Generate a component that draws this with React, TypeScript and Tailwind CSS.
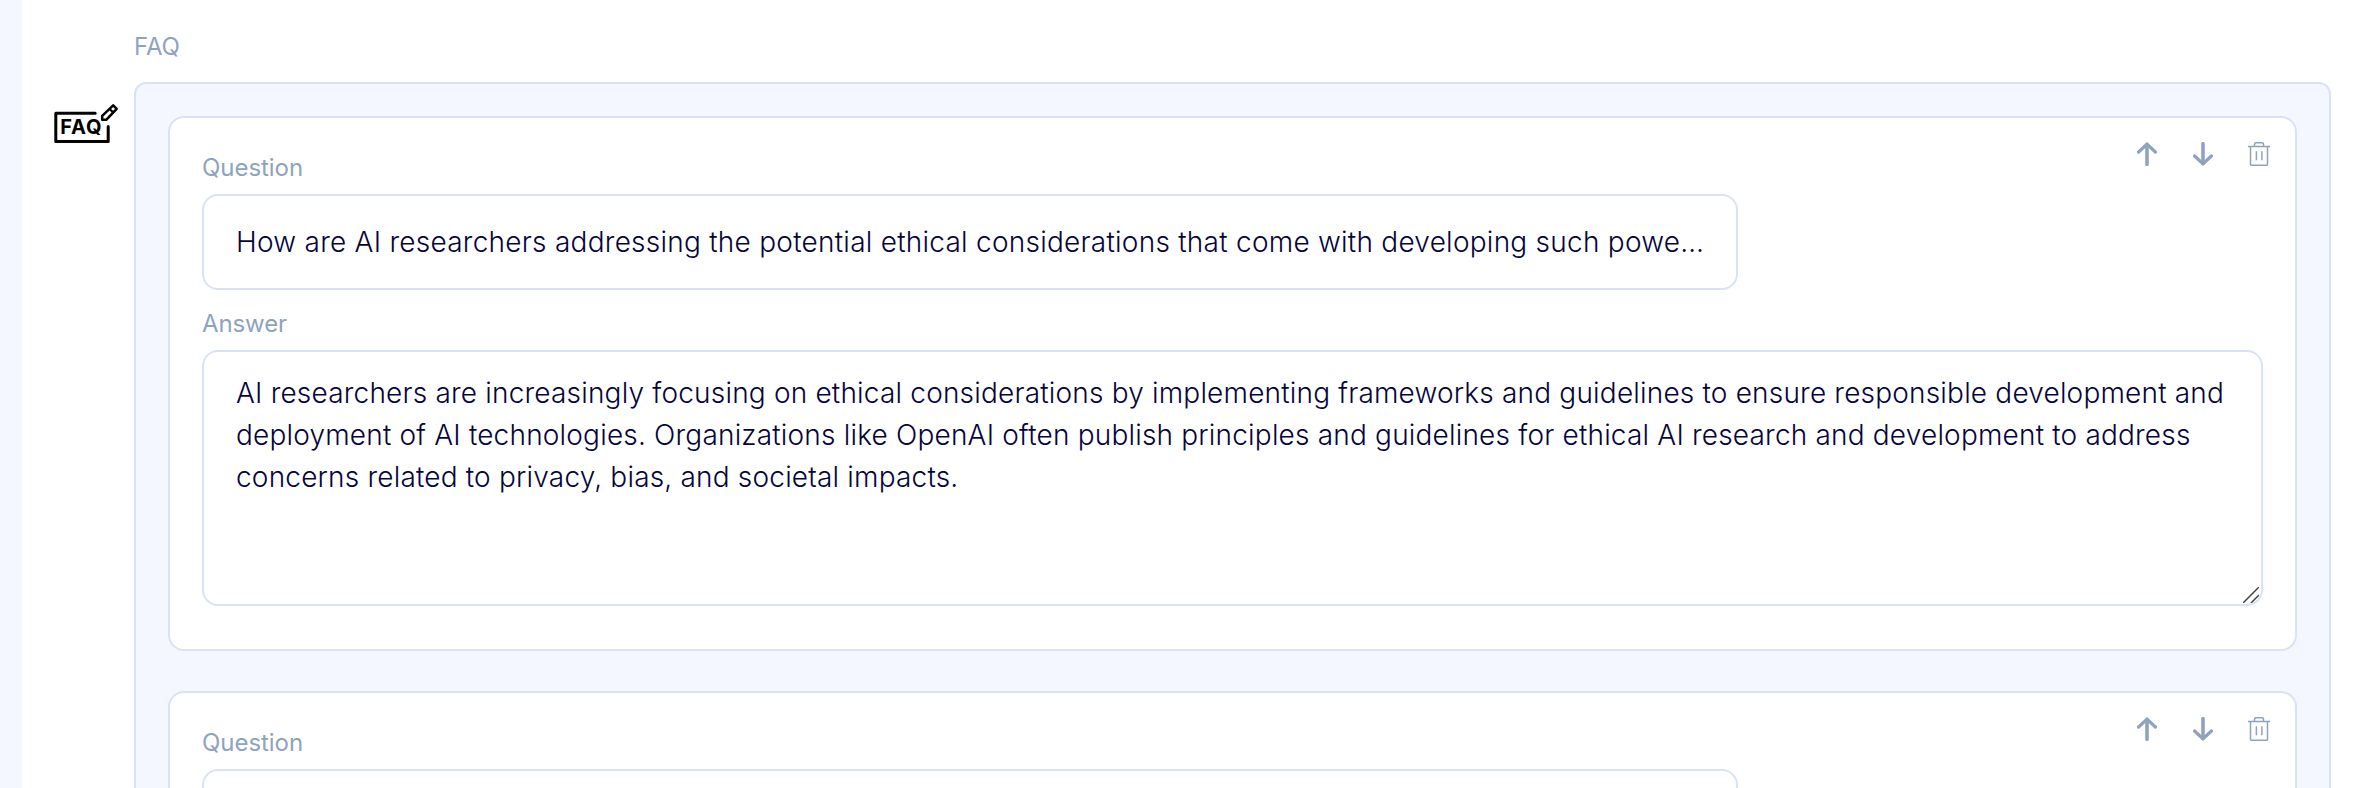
type FaqEntry = { question: string; answer?: string };

const ENTRIES: FaqEntry[] = [
  {
    question:
      'How are AI researchers addressing the potential ethical considerations that come with developing such powe…',
    answer:
      'AI researchers are increasingly focusing on ethical considerations by implementing frameworks and guidelines to ensure responsible development and deployment of AI technologies. Organizations like OpenAI often publish principles and guidelines for ethical AI research and development to address concerns related to privacy, bias, and societal impacts.',
  },
  { question: '' },
];

function FaqIcon() {
  return (
    <svg width="68" height="42" viewBox="0 0 68 42" fill="none" stroke="#000" strokeLinecap="round" strokeLinejoin="round">
      <path d="M43.2 10.2H3.8V38.5H56.2V23.5" strokeWidth="3" />
      <path d="M50.2 16.8V12.8L61.2 2.4L64.7 5.8L54.2 16.8Z" strokeWidth="2.5" />
      <path d="M57.8 6.2 61.2 9.4" strokeWidth="2.2" />
      <text x="8.2" y="31.3" stroke="none" fill="#000" fontFamily="Inter, sans-serif" fontSize="20" fontWeight="700" textLength="41.4">
        FAQ
      </text>
    </svg>
  );
}

function UpIcon() {
  return (
    <svg width="20" height="24" viewBox="0 0 20 24" fill="none" stroke="currentColor" strokeWidth="3.6">
      <path d="M10 22.3V2.6" strokeLinecap="round" />
      <path d="M1.6 10 10 2.1 18.4 10" strokeLinecap="round" strokeLinejoin="round" strokeWidth="3.3" />
    </svg>
  );
}

function DownIcon() {
  return (
    <svg width="20" height="24" viewBox="0 0 20 24" fill="none" stroke="currentColor" strokeWidth="3.6">
      <path d="M10 1.7V21.4" strokeLinecap="round" />
      <path d="M1.6 14 10 21.9 18.4 14" strokeLinecap="round" strokeLinejoin="round" strokeWidth="3.3" />
    </svg>
  );
}

function TrashIcon() {
  return (
    <svg width="22" height="24" viewBox="0 0 22 24" fill="none" stroke="currentColor" strokeWidth="1.5">
      <path d="M0 4.5H22" />
      <path d="M6.5 4.5V2.3Q6.5 .7 8.1 .7H13.9Q15.5 .7 15.5 2.3V4.5" />
      <path d="M2.5 4.5V22.2Q2.5 23.3 3.6 23.3H18.4Q19.5 23.3 19.5 22.2V4.5" />
      <path d="M8.4 9.3V18.3M13.9 9.3V18.3" />
    </svg>
  );
}

function FaqCard({ question, answer }: FaqEntry) {
  return (
    <section className="relative h-[535px] shrink-0 rounded-[16px] border-2 border-[#d9e3f4] bg-white px-8 pt-8">
      <div className="absolute top-[24px] right-[25px] flex gap-9 text-[#8fa3bf]">
        <button type="button" aria-label="Move up"><UpIcon /></button>
        <button type="button" aria-label="Move down"><DownIcon /></button>
        <button type="button" aria-label="Delete" className="-ml-px"><TrashIcon /></button>
      </div>
      <div className="flex h-11 items-start text-2xl leading-9 tracking-[-0.05px] text-[#8fa3bf]">Question</div>
      <div className="flex h-24 w-[1536px] items-center rounded-[16px] border-2 border-[#d9e3f4] px-8 text-[28px] font-light tracking-[0.25px] whitespace-nowrap text-[#05053c]">
        {question}
      </div>
      {answer && (
        <>
          <div className="flex h-[60px] items-start pt-4 text-2xl leading-9 tracking-[-0.1px] text-[#8fa3bf]">Answer</div>
          <div className="relative">
            <textarea
              defaultValue={answer}
              className="block h-64 w-full resize-none rounded-[16px] border-2 border-[#d9e3f4] bg-white px-8 py-5 text-[28px] leading-[42px] font-light tracking-[0.19px] text-[#05053c] outline-none"
            />
            <svg className="absolute right-1 bottom-[3px]" width="16" height="16" viewBox="0 0 16 16" stroke="#444" strokeWidth="1.5">
              <path d="M0 16 16 0M8 16 16 8" />
            </svg>
          </div>
        </>
      )}
    </section>
  );
}

export default function App() {
  return (
    <div className="flex h-[788px] w-full overflow-hidden bg-white font-['Inter',sans-serif]">
      <aside className="w-[22px] shrink-0 bg-[#f4f7ff]" />
      <div className="w-28 shrink-0 pt-[103px] pl-[30px]">
        <FaqIcon />
      </div>
      <main className="flex w-[2197px] shrink-0 flex-col pt-[29px]">
        <div className="h-[53px] shrink-0 text-2xl leading-9 tracking-[-0.1px] text-[#8fa3bf]">FAQ</div>
        <div className="flex h-[1200px] shrink-0 flex-col gap-10 rounded-[12px] border-2 border-[#d9e3f4] bg-[#f4f7ff] p-8">
          {ENTRIES.map((entry, i) => (
            <FaqCard key={i} {...entry} />
          ))}
        </div>
      </main>
    </div>
  );
}
